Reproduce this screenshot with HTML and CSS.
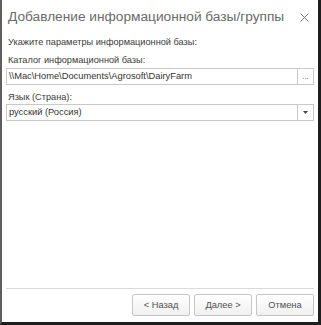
FILE: index.html
```html
<!DOCTYPE html>
<html lang="ru">
<head>
<meta charset="utf-8">
<link rel="stylesheet" href="styles.css">
</head>
<body>
<div class="window">
  <div class="header">
    <div class="title">Добавление информационной базы/группы</div>
    <div class="close">
      <svg width="9" height="9" viewBox="0 0 9 9"><path d="M0.5 0.5 L8.5 8.5 M8.5 0.5 L0.5 8.5" stroke="#6a6a6a" stroke-width="0.9" fill="none"/></svg>
    </div>
  </div>
  <div class="content">
    <div class="hint">Укажите параметры информационной базы:</div>
    <div class="label label-first">Каталог информационной базы:</div>
    <div class="field">
      <div class="field-text">\\Mac\Home\Documents\Agrosoft\DairyFarm</div>
      <div class="field-btn">...</div>
    </div>
    <div class="label">Язык (Страна):</div>
    <div class="field">
      <div class="field-text">русский (Россия)</div>
      <div class="field-btn">
        <svg width="5" height="3" viewBox="0 0 5 3"><path d="M0 0 H5 L2.5 3 Z" fill="#444"/></svg>
      </div>
    </div>
  </div>
  <div class="footer">
    <div class="btn">&lt; Назад</div>
    <div class="btn">Далее &gt;</div>
    <div class="btn">Отмена</div>
  </div>
</div>
</body>
</html>
```

FILE: styles.css
```css
html, body {
  margin: 0;
  padding: 0;
  background: #fff;
}
body {
  font-family: "Liberation Sans", Arial, sans-serif;
  color: #333;
}
.window {
  width: 321px;
  height: 325px;
  box-sizing: border-box;
  border-left: 2px solid #5e5e5e;
  border-right: 3px solid #1e1e1e;
  border-bottom: 3px solid #1e1e1e;
  display: flex;
  flex-direction: column;
  padding: 0 4px 0 4px;
}
.header {
  display: flex;
  align-items: center;
  justify-content: space-between;
  padding: 7px 0 0 2px;
  height: 20px;
}
.title {
  font-size: 13.7px;
  line-height: 20px;
  color: #6a6a6a;
  white-space: nowrap;
}
.close {
  width: 9px;
  height: 9px;
  display: flex;
  margin-right: 5px;
}
.content {
  flex: 1;
  display: flex;
  flex-direction: column;
  padding-top: 8px;
}
.hint, .label {
  font-size: 9.2px;
  line-height: 14px;
  padding-left: 2px;
  color: #3a3a3a;
}
.label {
  margin-top: 5px;
  margin-bottom: 0;
}
.label-first {
  margin-top: 4px;
  margin-bottom: 1px;
}
.field {
  display: flex;
  height: 17px;
  box-sizing: border-box;
  border: 1px solid #c9c9c9;
  background: #fff;
}
.field-text {
  flex: 1;
  font-size: 9.3px;
  line-height: 15px;
  padding-left: 2px;
  color: #333;
  white-space: nowrap;
  overflow: hidden;
}
.field-btn {
  width: 15px;
  border-left: 1px solid #c9c9c9;
  display: flex;
  align-items: center;
  justify-content: center;
  font-size: 8px;
  color: #555;
  line-height: 15px;
}
.footer {
  border-top: 1px solid #d9d9d9;
  display: flex;
  justify-content: flex-end;
  gap: 4px;
  padding: 5px 0 6px 0;
}
.btn {
  width: 58px;
  height: 22px;
  box-sizing: border-box;
  border: 1px solid #c6c6c6;
  border-radius: 2px;
  background: linear-gradient(#ffffff, #f0f0f0);
  font-size: 9.3px;
  line-height: 20px;
  text-align: center;
  color: #505050;
}
```
